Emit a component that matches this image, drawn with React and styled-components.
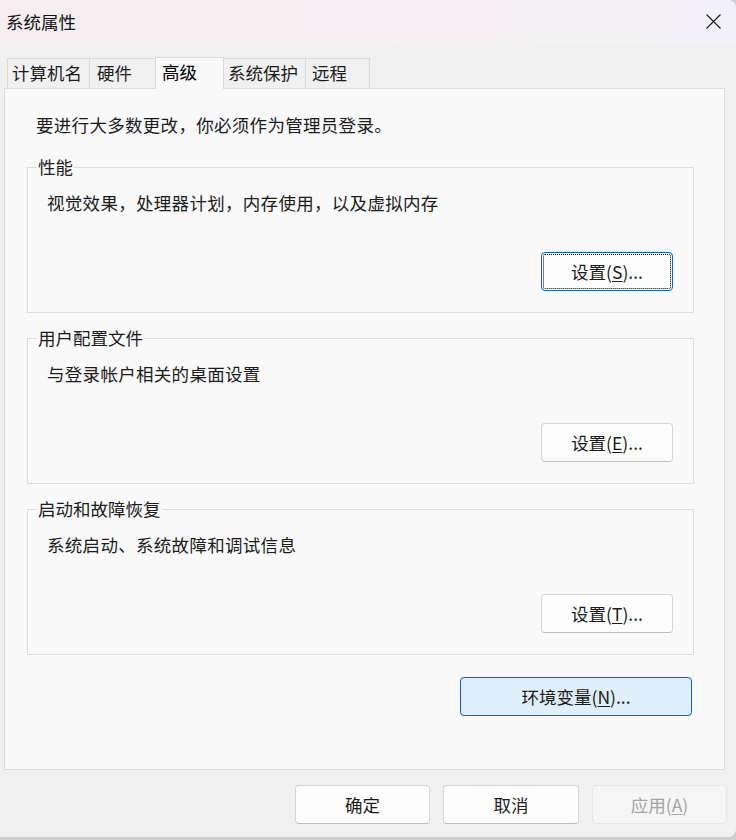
import React from "react";
import styled, { createGlobalStyle } from "styled-components";

const GlobalStyle = createGlobalStyle`
  html, body {
    margin: 0;
    padding: 0;
    background: #cfcfcf;
  }
  body {
    font-family: "Noto Sans CJK SC", "Noto Sans", sans-serif;
  }
`;

const tabs = [
  { label: "计算机名", width: 83, pad: 4 },
  { label: "硬件", width: 67, pad: 7 },
  { label: "高级", width: 69, pad: 6, active: true },
  { label: "系统保护", width: 83, pad: 4 },
  { label: "远程", width: 65, pad: 6 },
];

const groups = [
  {
    title: "性能",
    desc: "视觉效果，处理器计划，内存使用，以及虚拟内存",
    key: "S",
    focused: true,
  },
  { title: "用户配置文件", desc: "与登录帐户相关的桌面设置", key: "E" },
  { title: "启动和故障恢复", desc: "系统启动、系统故障和调试信息", key: "T" },
];

const CloseIcon = () => (
  <svg width="15" height="15" viewBox="0 0 15 15">
    <path d="M0.5 0.5 L14.5 14.5 M14.5 0.5 L0.5 14.5" stroke="#1a1a1a" strokeWidth="1.1" fill="none" />
  </svg>
);

const App = () => {
  return (
    <>
      <GlobalStyle />
      <Window>
        <TitleBar>
          <Title>系统属性</Title>
          <CloseIcon />
        </TitleBar>

        <Body>
          <TabRow>
            {tabs.map((t) => (
              <Tab key={t.label} $width={t.width} $pad={t.pad} $active={t.active}>
                {t.label}
              </Tab>
            ))}
          </TabRow>

          <Panel>
            <Intro>要进行大多数更改，你必须作为管理员登录。</Intro>

            {groups.map((g) => (
              <Group key={g.title}>
                <Legend>{g.title}</Legend>
                <GroupBody>
                  <Desc>{g.desc}</Desc>
                  <Button $width={132} $focused={g.focused}>
                    设置(<u>{g.key}</u>)...
                  </Button>
                </GroupBody>
              </Group>
            ))}

            <EnvButton $width={232}>
              环境变量(<u>N</u>)...
            </EnvButton>
          </Panel>

          <Footer>
            <Button $width={135}>确定</Button>
            <Button $width={136}>取消</Button>
            <Button $width={135} $disabled>
              应用(<u>A</u>)
            </Button>
          </Footer>
        </Body>
      </Window>
    </>
  );
};

export default App;

const Window = styled.div`
  width: 736px;
  height: 837px;
  background: #f0f0f0;
  display: flex;
  flex-direction: column;
  border-top-right-radius: 8px;
  border-bottom-right-radius: 8px;
  overflow: hidden;
  font-size: 17.5px;
  color: #1b1b1b;
`;

const TitleBar = styled.div`
  height: 43px;
  flex-shrink: 0;
  display: flex;
  align-items: center;
  justify-content: space-between;
  padding: 0 15px 0 6px;
  background: linear-gradient(90deg, #f4eef0 0%, #f6eef2 45%, #f3f1f8 100%);
`;

const Title = styled.div`
  font-size: 17.5px;
  line-height: 24px;
  color: #111;
`;

const Body = styled.div`
  display: flex;
  flex-direction: column;
  padding: 14px 11px 0 4px;
`;

const TabRow = styled.div`
  display: flex;
  align-items: flex-start;
  height: 32px;
  padding-left: 3px;
  position: relative;
  z-index: 1;
`;

const Tab = styled.div`
  box-sizing: border-box;
  width: ${(p) => p.$width}px;
  height: ${(p) => (p.$active ? 32 : 30)}px;
  margin-top: ${(p) => (p.$active ? 0 : 1)}px;
  margin-right: -1px;
  padding-left: ${(p) => p.$pad}px;
  border: 1px solid #dadada;
  border-bottom: none;
  background: ${(p) => (p.$active ? "#f9f9f9" : "#f0f0f0")};
  line-height: 28px;
  white-space: nowrap;
  position: relative;
  z-index: ${(p) => (p.$active ? 2 : 1)};
  color: ${(p) => (p.$active ? "#000" : "#1b1b1b")};
`;

const Panel = styled.div`
  box-sizing: border-box;
  width: 721px;
  height: 682px;
  margin-top: -1px;
  border: 1px solid #dcdcdc;
  background: #f9f9f9;
  padding: 24px 0 0 22px;
  display: flex;
  flex-direction: column;
`;

const Intro = styled.div`
  line-height: 24px;
  margin-left: 9px;
  margin-bottom: 18px;
  letter-spacing: 0.3px;
`;

const Group = styled.fieldset`
  box-sizing: border-box;
  width: 667px;
  margin: 0 0 13px 0;
  padding: 0;
  border: 1px solid #dcdcdc;
  min-width: 0;
`;

const Legend = styled.legend`
  margin-left: 9px;
  padding: 0 1px;
  line-height: 24px;
  font-size: 17.5px;
`;

const GroupBody = styled.div`
  box-sizing: border-box;
  height: 133px;
  padding: 12px 20px 21px 19px;
  display: flex;
  flex-direction: column;
  justify-content: space-between;
`;

const Desc = styled.div`
  line-height: 24px;
  letter-spacing: 0.3px;
`;

const Button = styled.div`
  box-sizing: border-box;
  width: ${(p) => p.$width}px;
  height: 39px;
  align-self: flex-end;
  display: flex;
  align-items: center;
  justify-content: center;
  border-radius: 4px;
  font-size: 17.5px;
  background: ${(p) => (p.$disabled ? "#f5f5f5" : "#fdfdfd")};
  color: ${(p) => (p.$disabled ? "#a3a3a3" : "#1b1b1b")};
  border: 1px solid ${(p) => (p.$focused ? "#0067c0" : p.$disabled ? "#e6e6e6" : "#d4d4d4")};
  border-bottom-color: ${(p) => (p.$focused ? "#0067c0" : p.$disabled ? "#e6e6e6" : "#bcbcbc")};
  outline: ${(p) => (p.$focused ? "1px dotted #000" : "none")};
  outline-offset: -3px;

  u {
    text-underline-offset: 2px;
  }
`;

const EnvButton = styled(Button)`
  margin-top: 9px;
  margin-right: 32px;
  background: #e0eef9;
  border-color: #0067c0;
  border-bottom-color: #0067c0;
`;

const Footer = styled.div`
  display: flex;
  justify-content: flex-end;
  gap: 13px;
  padding-top: 15px;
  margin-right: -2px;
`;
